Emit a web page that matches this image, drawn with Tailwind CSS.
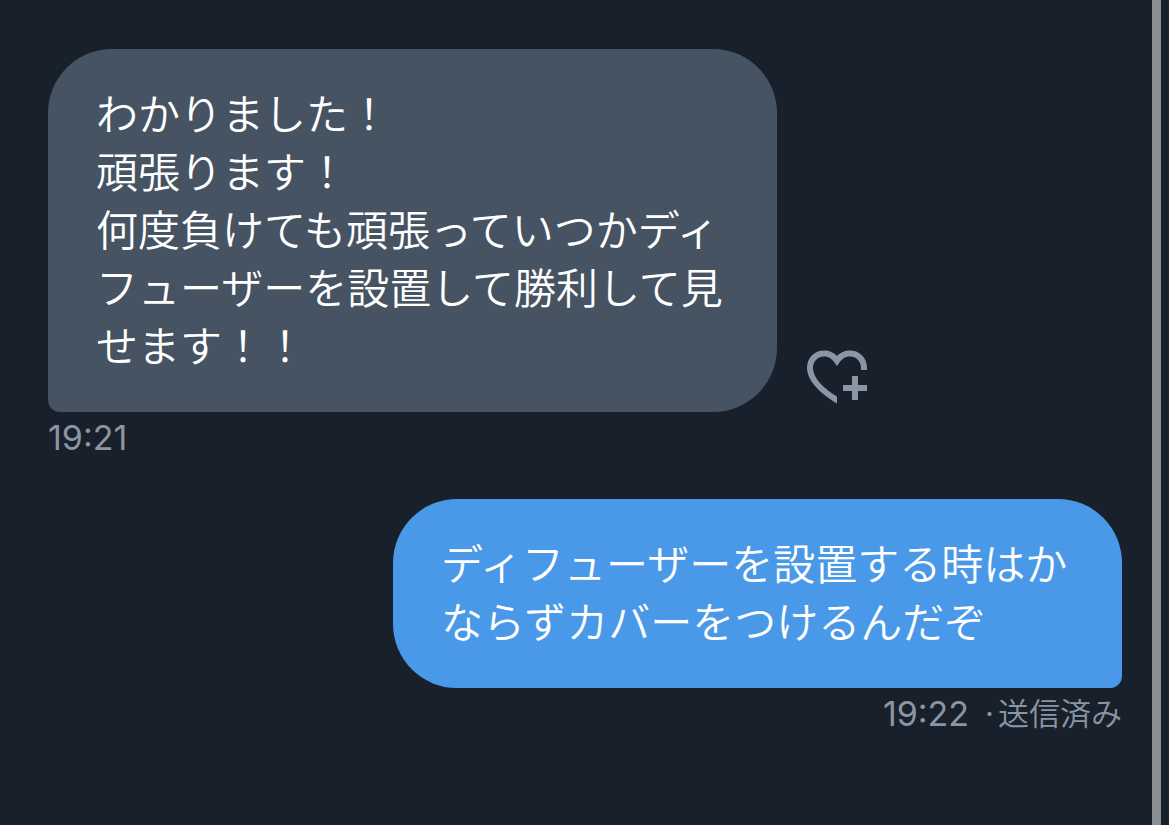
<!DOCTYPE html>
<html lang="ja">
<head>
<meta charset="utf-8">
<meta name="viewport" content="width=device-width, initial-scale=1">
<title>メッセージ</title>
<script src="https://cdn.jsdelivr.net/npm/@tailwindcss/browser@4"></script>
</head>
<body class="flex min-h-screen bg-[#18202b] font-['Inter','Noto_Sans_CJK_JP',sans-serif] text-white">
<main class="flex min-w-0 flex-1 flex-col gap-[41px] pt-[49px] pr-[30px] pl-12">
  <article class="flex flex-col items-start">
    <div class="flex items-end gap-[30px]">
      <p class="max-w-[729px] rounded-[64px] rounded-bl-[12px] bg-[#465362] px-12 pt-[37px] pb-9 text-[42px]/[58px] font-[350]">わかりました！<br>頑張ります！<br>何度負けても頑張っていつかディフューザーを設置して勝利して見せます！！</p>
      <button type="button" aria-label="リアクションを追加" class="mb-2 text-[#8b95a3]">
        <svg class="h-[54px] w-[60px]" viewBox="0 0 60 54" fill="currentColor" aria-hidden="true">
          <path d="M30 53.5C14 44 0 31 0 18C0 8 7 .5 17 .5C22 .5 27 2.500 30 6C33 2.5 38 .5 43 .5C53 .5 60 8 60 18V20H54V18C54 11 49 6.5 43 6.5C38 6.5 35 8.5 30 16C25 8.5 22 6.5 17 6.5C11 6.5 6 11 6 18C6 28 17 39 30 46.5Z"/>
          <path d="M45 26H51V35H60V41H51V50H45V41H36V35H45Z"/>
        </svg>
      </button>
    </div>
    <time class="pt-1.5 text-[34px]/[40px] text-[#8b95a3]">19:21</time>
  </article>
  <article class="flex flex-col items-end">
    <p class="max-w-[729px] rounded-[64px] rounded-br-[12px] bg-[#4a99e9] px-12 pt-[37px] pb-9 text-[42px]/[58px] font-[350]">ディフューザーを設置する時はかならずカバーをつけるんだぞ</p>
    <div class="flex pt-1.5 text-[34px]/[40px] text-[#8b95a3]"><time>19:22</time><span class="pr-1 pl-4 text-[31px]">·</span><span class="text-[31px] font-[350]">送信済み</span></div>
  </article>
</main>
<div class="mr-2 w-[9px] bg-[#8b8d94]"></div>
</body>
</html>
